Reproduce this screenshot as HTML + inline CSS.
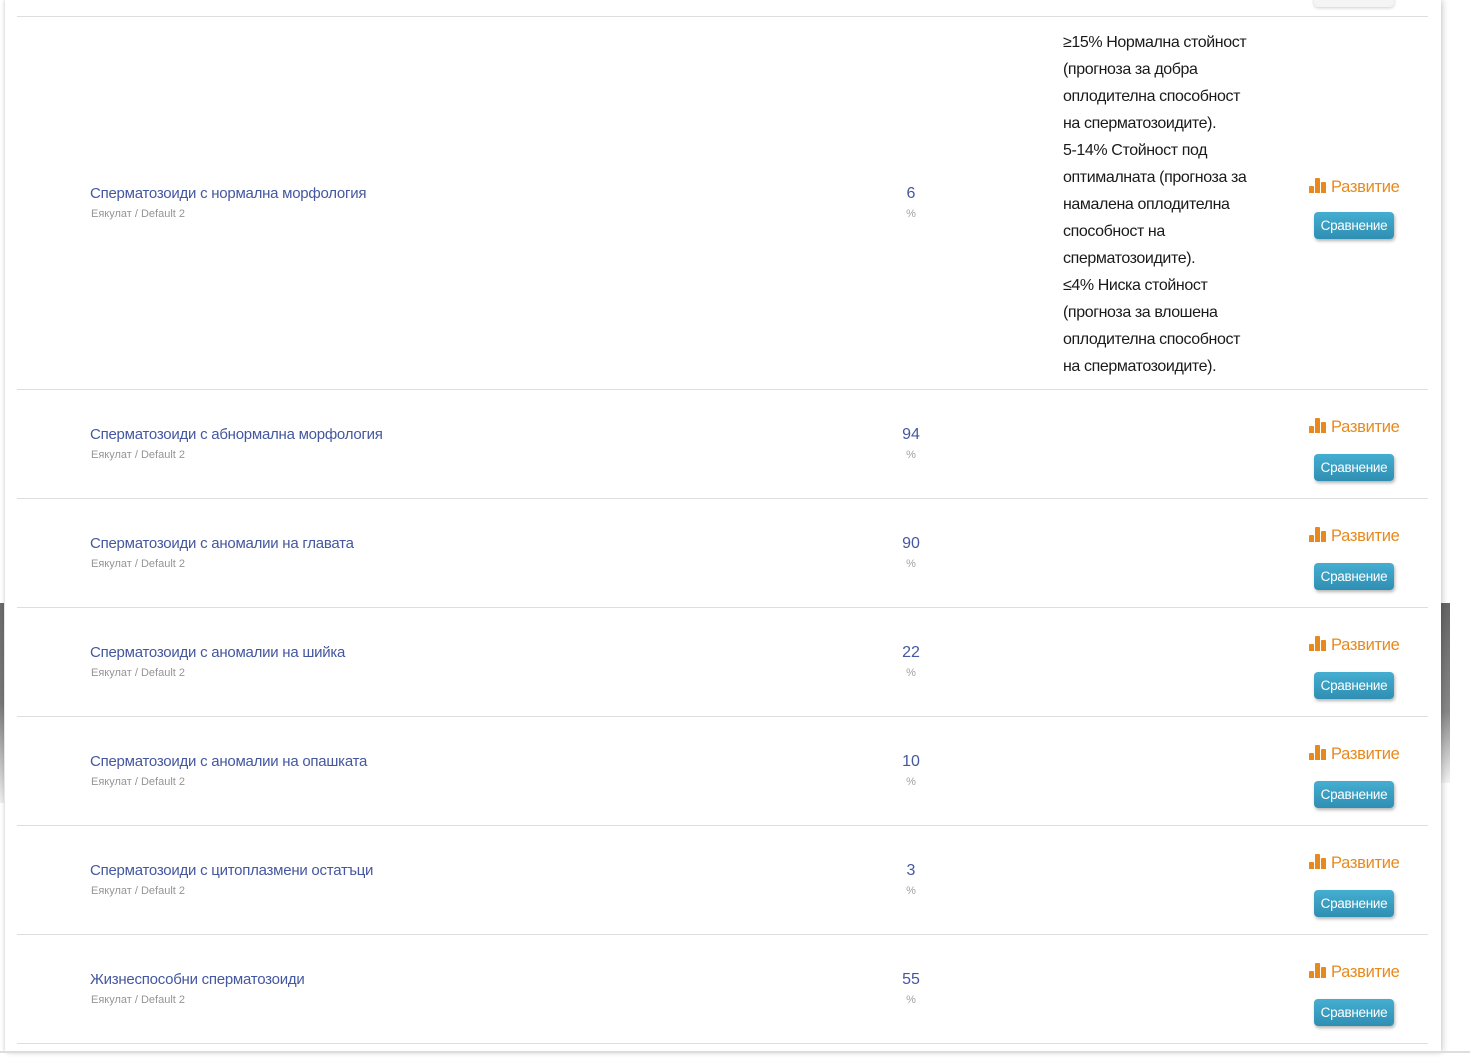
<!DOCTYPE html>
<html><head><meta charset="utf-8">
<style>
*{margin:0;padding:0;box-sizing:border-box}
html,body{width:1470px;height:1058px;overflow:hidden;background:#fff;font-family:"Liberation Sans",sans-serif}
.ls{position:absolute;left:0;top:603px;width:4px;height:200px;background:linear-gradient(#6a6a6a,#777 50%,#eee)}
.rs{position:absolute;left:1441px;top:603px;width:9px;height:180px;background:linear-gradient(#666,#888 60%,#f3f3f3)}
.panel{position:absolute;left:5px;top:0;width:1436px;height:1052px;background:#fff;box-shadow:2px 0 6px rgba(0,0,0,.18),-1px 0 3px rgba(0,0,0,.1)}
.bot{position:absolute;left:0;top:1051px;width:1470px;height:2px;background:#ddd}
.sep{position:absolute;left:17px;width:1411px;height:1px;background:#dedede}
.nm{position:absolute;left:90px;font-size:15px;letter-spacing:-0.25px;color:#4457a0;line-height:18px;white-space:nowrap}
.sub{position:absolute;left:91px;font-size:11px;color:#959595;letter-spacing:0;line-height:13px;white-space:nowrap}
.val{position:absolute;left:861px;width:100px;text-align:center;font-size:16px;color:#4457a0;line-height:18px}
.pc{position:absolute;left:861px;width:100px;text-align:center;font-size:11px;color:#a0a0a0;line-height:13px}
.dev{position:absolute;left:1309px;font-size:16.5px;color:#e8891c;line-height:20px;white-space:nowrap;letter-spacing:-0.3px}
.dev i{display:inline-block;width:18px;height:15px;position:relative;vertical-align:-1px;margin-right:4px}
.dev i b{position:absolute;bottom:0;width:5px;background:#e8891c;border-radius:1px 1px 0 0}
.btn{position:absolute;left:1314px;width:80px;height:27px;border-radius:4px;background:linear-gradient(#45aed0,#2f8fb3);color:#fff;font-size:13.5px;letter-spacing:-0.3px;text-align:center;line-height:27px;box-shadow:1px 2px 3px rgba(0,0,0,.3)}
.ref{position:absolute;left:1063px;top:29px;font-size:16px;line-height:27px;color:#1a1a1a;letter-spacing:-0.4px;white-space:nowrap}
</style></head><body>
<div class="ls"></div><div class="rs"></div>
<div class="panel"></div>
<div class="bot"></div>
<div class="btn" style="top:-20px;box-shadow:0 1px 3px rgba(0,0,0,.2);background:#f4f4f4"></div>

<div class="sep" style="top:16px"></div>
<div class="sep" style="top:389px"></div>
<div class="sep" style="top:498px"></div>
<div class="sep" style="top:607px"></div>
<div class="sep" style="top:716px"></div>
<div class="sep" style="top:825px"></div>
<div class="sep" style="top:934px"></div>
<div class="sep" style="top:1043px"></div>

<div class="ref">≥15% Нормална стойност<br>(прогноза за добра<br>оплодителна способност<br>на сперматозоидите).<br>5-14% Стойност под<br>оптималната (прогноза за<br>намалена оплодителна<br>способност на<br>сперматозоидите).<br>≤4% Ниска стойност<br>(прогноза за влошена<br>оплодителна способност<br>на сперматозоидите).</div>

<div class="nm" style="top:185px">Сперматозоиди с нормална морфология</div>
<div class="sub" style="top:208px">Еякулат / Default 2</div>
<div class="val" style="top:185px">6</div><div class="pc" style="top:208px">%</div>
<div class="dev" style="top:177px"><i><b style="left:0;height:7px"></b><b style="left:6px;height:15px"></b><b style="left:12px;height:11px"></b></i>Развитие</div>
<div class="btn" style="top:212px">Сравнение</div>

<div class="nm" style="top:426px">Сперматозоиди с абнормална морфология</div>
<div class="sub" style="top:449px">Еякулат / Default 2</div>
<div class="val" style="top:426px">94</div><div class="pc" style="top:449px">%</div>
<div class="dev" style="top:417px"><i><b style="left:0;height:7px"></b><b style="left:6px;height:15px"></b><b style="left:12px;height:11px"></b></i>Развитие</div>
<div class="btn" style="top:454px">Сравнение</div>

<div class="nm" style="top:535px">Сперматозоиди с аномалии на главата</div>
<div class="sub" style="top:558px">Еякулат / Default 2</div>
<div class="val" style="top:535px">90</div><div class="pc" style="top:558px">%</div>
<div class="dev" style="top:526px"><i><b style="left:0;height:7px"></b><b style="left:6px;height:15px"></b><b style="left:12px;height:11px"></b></i>Развитие</div>
<div class="btn" style="top:563px">Сравнение</div>

<div class="nm" style="top:644px">Сперматозоиди с аномалии на шийка</div>
<div class="sub" style="top:667px">Еякулат / Default 2</div>
<div class="val" style="top:644px">22</div><div class="pc" style="top:667px">%</div>
<div class="dev" style="top:635px"><i><b style="left:0;height:7px"></b><b style="left:6px;height:15px"></b><b style="left:12px;height:11px"></b></i>Развитие</div>
<div class="btn" style="top:672px">Сравнение</div>

<div class="nm" style="top:753px">Сперматозоиди с аномалии на опашката</div>
<div class="sub" style="top:776px">Еякулат / Default 2</div>
<div class="val" style="top:753px">10</div><div class="pc" style="top:776px">%</div>
<div class="dev" style="top:744px"><i><b style="left:0;height:7px"></b><b style="left:6px;height:15px"></b><b style="left:12px;height:11px"></b></i>Развитие</div>
<div class="btn" style="top:781px">Сравнение</div>

<div class="nm" style="top:862px">Сперматозоиди с цитоплазмени остатъци</div>
<div class="sub" style="top:885px">Еякулат / Default 2</div>
<div class="val" style="top:862px">3</div><div class="pc" style="top:885px">%</div>
<div class="dev" style="top:853px"><i><b style="left:0;height:7px"></b><b style="left:6px;height:15px"></b><b style="left:12px;height:11px"></b></i>Развитие</div>
<div class="btn" style="top:890px">Сравнение</div>

<div class="nm" style="top:971px">Жизнеспособни сперматозоиди</div>
<div class="sub" style="top:994px">Еякулат / Default 2</div>
<div class="val" style="top:971px">55</div><div class="pc" style="top:994px">%</div>
<div class="dev" style="top:962px"><i><b style="left:0;height:7px"></b><b style="left:6px;height:15px"></b><b style="left:12px;height:11px"></b></i>Развитие</div>
<div class="btn" style="top:999px">Сравнение</div>
</body></html>
